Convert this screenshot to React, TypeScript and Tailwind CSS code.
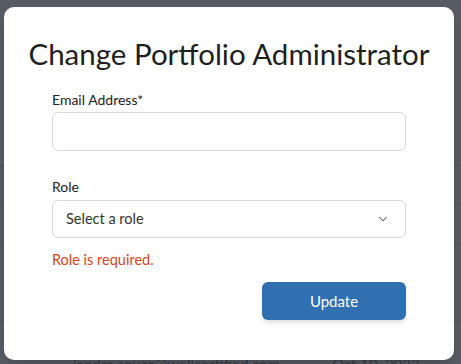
import { ChevronDown } from 'lucide-react'

const font = { fontFamily: 'Lato, "Noto Sans", sans-serif' }

function Backdrop() {
  return (
    <div className="h-full w-full bg-[#575b63]">
      <div className="h-[165px]" />
      <div className="h-[38px] border-t border-[#4d5159]" />
      <div className="h-[23px] border-t border-[#4d5159]" />
      <div className="h-[17px]" />
      <div className="h-[78px] border-t border-[#4d5159]" />
      <div className="h-[32px] border-t border-[#4d5159]" />
      <div className="flex text-[15px] text-[#3a3e45]" style={font}>
        <span className="ml-[73px]">jandra.souza@wellcertified.com</span>
        <span className="ml-[52px]">Oct 10, 2023</span>
      </div>
    </div>
  )
}

export default function App() {
  return (
    <div className="relative h-[364px] w-[461px] overflow-hidden" style={font}>
      <Backdrop />
      <div className="absolute left-[4px] top-[7px] flex h-[353px] w-[450px] flex-col rounded-[10px] bg-white shadow-lg">
        <h2 className="mt-[27px] text-center text-[29.5px] leading-[40px] text-[#1f1f1f]">
          Change Portfolio Administrator
        </h2>
        <form className="mx-[48px] mt-[16px] flex flex-col">
          <label className="text-[14px] leading-[20px] text-[#222]">Email Address*</label>
          <input
            type="text"
            className="mt-[2px] h-[39px] rounded-[6px] border border-[#d7d6df] px-3 text-[14px] outline-none"
          />
          <label className="mt-[26px] text-[14px] leading-[20px] text-[#222]">Role</label>
          <div className="mt-[3px] flex h-[38px] items-center justify-between rounded-[6px] border border-[#d7d6df] pl-[13px] pr-[15px]">
            <span className="text-[14.5px] text-[#333]">Select a role</span>
            <ChevronDown className="h-[14px] w-[14px] text-[#555]" strokeWidth={1.75} />
          </div>
          <p className="mt-[12px] text-[14.5px] leading-[20px] text-[#d8451f]">Role is required.</p>
          <div className="mt-[12px] flex justify-end">
            <button
              type="button"
              className="h-[38px] w-[144px] rounded-[6px] bg-[#3070b0] text-[15px] text-white shadow-md"
            >
              Update
            </button>
          </div>
        </form>
      </div>
    </div>
  )
}
